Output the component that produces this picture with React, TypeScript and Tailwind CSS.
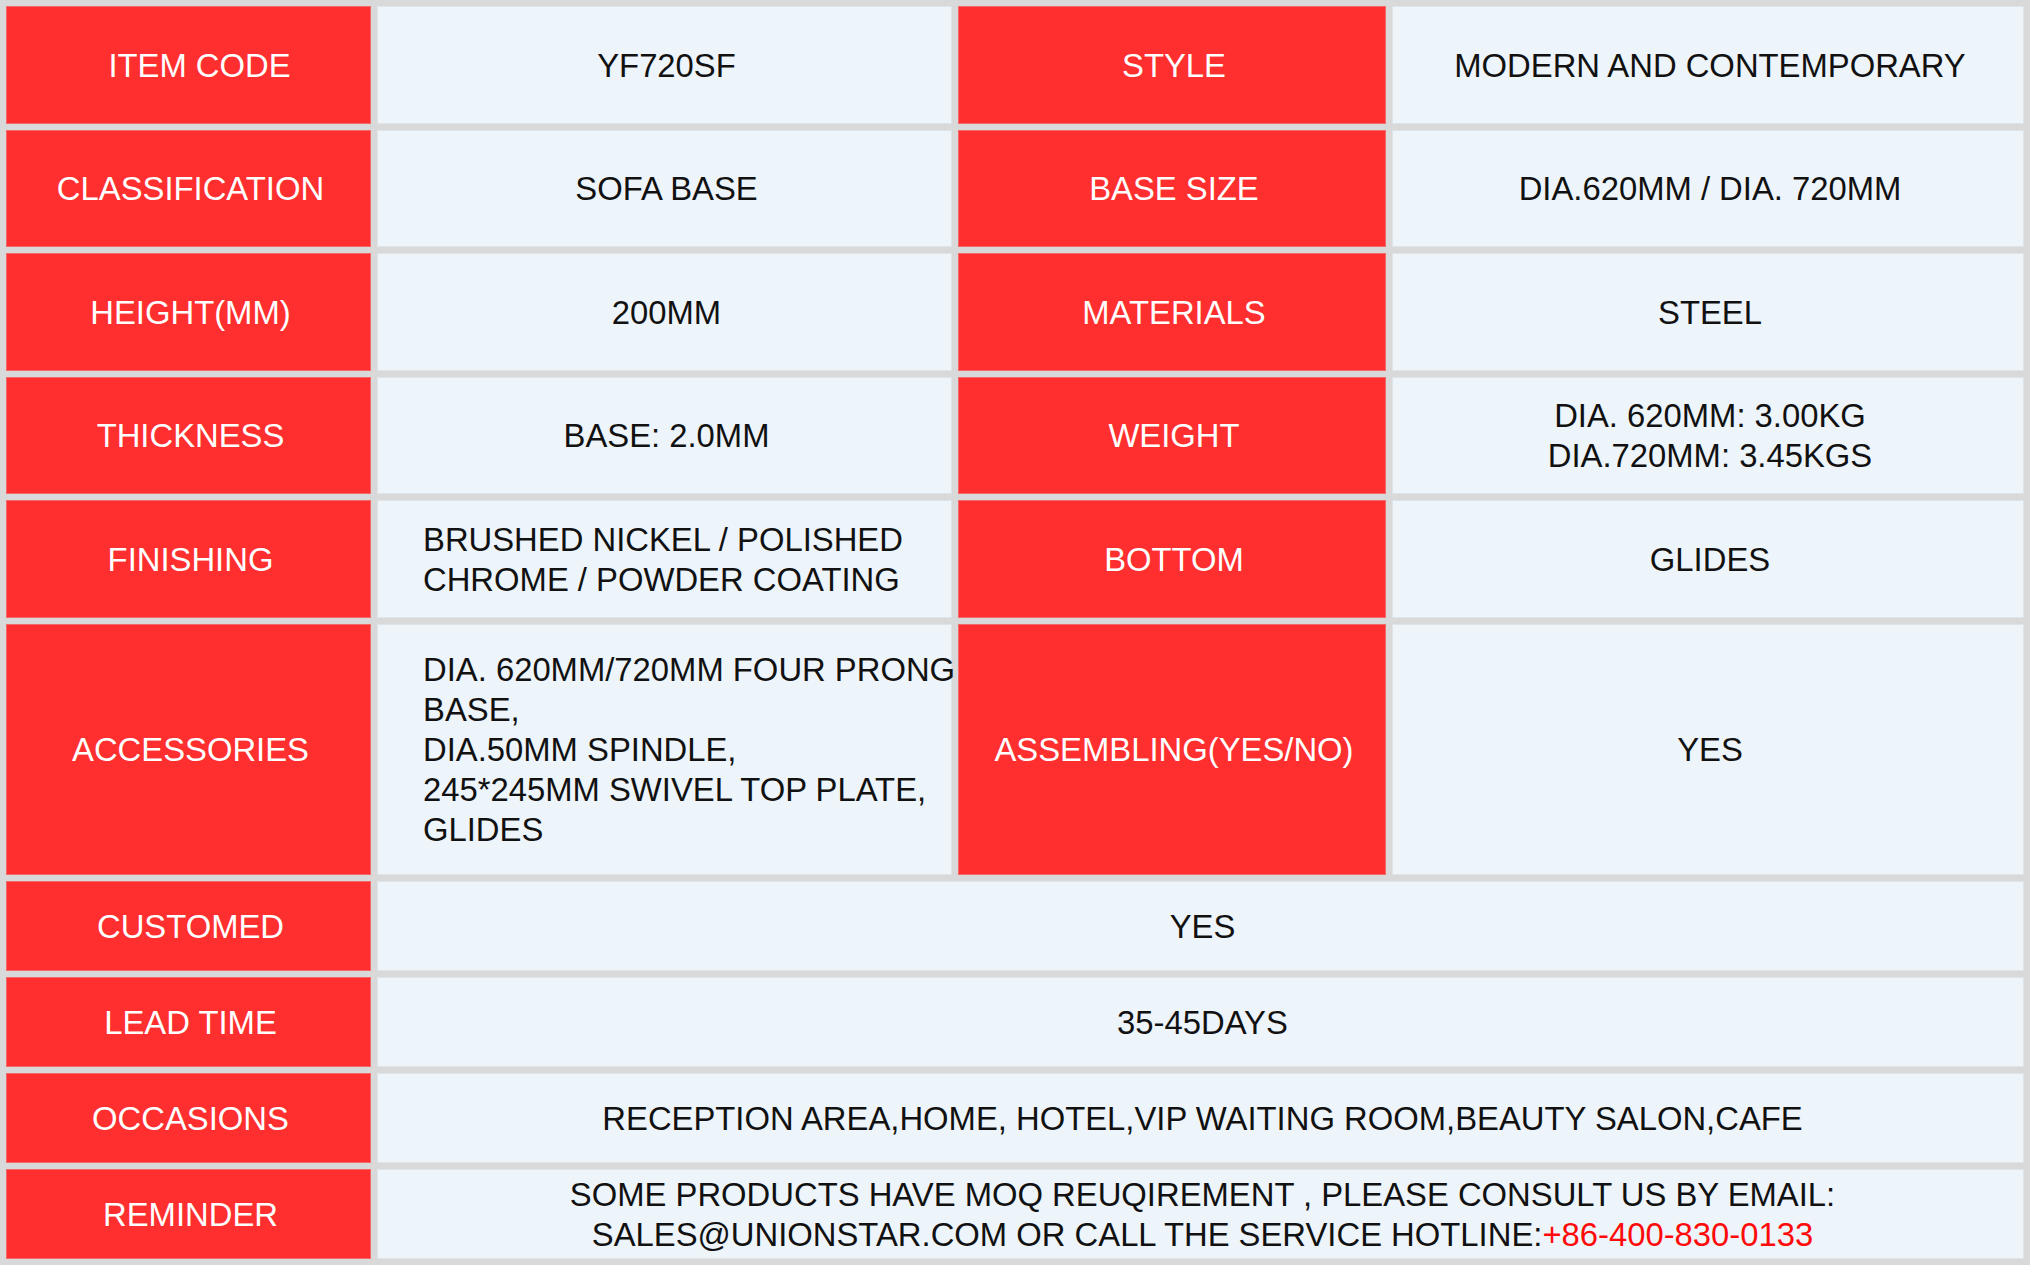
import React from 'react';

type Pair = { label: string; value: React.ReactNode; left?: boolean; shift?: boolean };

interface SpecRow {
  cells: Pair[];
  wide?: boolean;
}

const rows: SpecRow[] = [
  {
    cells: [
      { label: 'ITEM CODE', value: 'YF720SF', shift: true },
      { label: 'STYLE', value: 'MODERN AND CONTEMPORARY' },
    ],
  },
  {
    cells: [
      { label: 'CLASSIFICATION', value: 'SOFA BASE' },
      { label: 'BASE SIZE', value: 'DIA.620MM / DIA. 720MM' },
    ],
  },
  {
    cells: [
      { label: 'HEIGHT(MM)', value: '200MM' },
      { label: 'MATERIALS', value: 'STEEL' },
    ],
  },
  {
    cells: [
      { label: 'THICKNESS', value: 'BASE: 2.0MM' },
      {
        label: 'WEIGHT',
        value: (
          <>
            DIA. 620MM: 3.00KG
            <br />
            DIA.720MM: 3.45KGS
          </>
        ),
      },
    ],
  },
  {
    cells: [
      { label: 'FINISHING', value: 'BRUSHED NICKEL / POLISHED CHROME / POWDER COATING', left: true },
      { label: 'BOTTOM', value: 'GLIDES' },
    ],
  },
  {
    cells: [
      {
        label: 'ACCESSORIES',
        left: true,
        value: (
          <span className="whitespace-nowrap">
            DIA. 620MM/720MM FOUR PRONG
            <br />
            BASE,
            <br />
            DIA.50MM SPINDLE,
            <br />
            245*245MM SWIVEL TOP PLATE,
            <br />
            GLIDES
          </span>
        ),
      },
      { label: 'ASSEMBLING(YES/NO)', value: 'YES' },
    ],
  },
  { wide: true, cells: [{ label: 'CUSTOMED', value: 'YES' }] },
  { wide: true, cells: [{ label: 'LEAD TIME', value: '35-45DAYS' }] },
  {
    wide: true,
    cells: [{ label: 'OCCASIONS', value: 'RECEPTION AREA,HOME, HOTEL,VIP WAITING ROOM,BEAUTY SALON,CAFE' }],
  },
  {
    wide: true,
    cells: [
      {
        label: 'REMINDER',
        value: (
          <>
            SOME PRODUCTS HAVE MOQ REUQIREMENT , PLEASE CONSULT US BY EMAIL:
            <br />
            SALES@UNIONSTAR.COM OR CALL THE SERVICE HOTLINE:
            <span className="text-[#ff0a0a]">+86-400-830-0133</span>
          </>
        ),
      },
    ],
  },
];

function LabelCell({ children, shift }: { children: React.ReactNode; shift?: boolean }) {
  return (
    <div
      className={`bg-[#ff2e2f] border border-[#f46a6a] text-white flex items-center justify-center text-center pt-[2px] ${
        shift ? 'pl-[22px]' : 'pl-[4px]'
      }`}
    >
      {children}
    </div>
  );
}

function ValueCell({ children, left, wide }: { children: React.ReactNode; left?: boolean; wide?: boolean }) {
  return (
    <div
      className={`bg-[#edf4fa] border border-[#dfe4e8] text-[#111111] flex items-center pt-[2px] ${
        left ? 'justify-start text-left pl-[45px]' : 'justify-center text-center pl-[4px]'
      } ${wide ? 'col-span-3' : ''}`}
    >
      <div>{children}</div>
    </div>
  );
}

export default function App() {
  return (
    <div
      className="w-[2030px] h-[1265px] bg-[#d9d9d9] p-[6px] grid gap-[6px] grid-cols-[365px_575px_428px_632px] grid-rows-[117.5px_117.5px_117.5px_117.5px_117.5px_251.5px_90px_90px_90px_90px] text-[32.8px] leading-[40px]"
      style={{ fontFamily: '"Liberation Sans", Arial, sans-serif' }}
    >
      {rows.map((row) =>
        row.cells.map((cell, i) => (
          <React.Fragment key={cell.label}>
            <LabelCell shift={cell.shift && i === 0}>{cell.label}</LabelCell>
            <ValueCell left={cell.left} wide={row.wide}>
              {cell.value}
            </ValueCell>
          </React.Fragment>
        ))
      )}
    </div>
  );
}
